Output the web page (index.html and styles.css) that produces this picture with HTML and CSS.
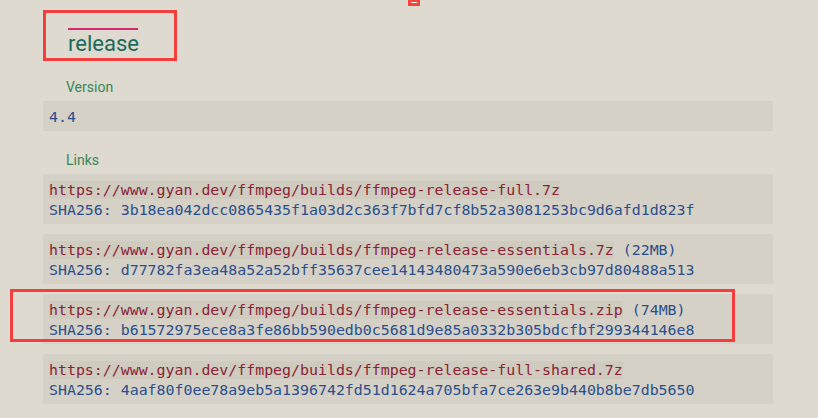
FILE: index.html
```
<!DOCTYPE html>
<html lang="en">
<head>
    <meta charset="UTF-8">
    <meta name="viewport" content="width=device-width, initial-scale=1.0">
    <title>release</title>
    <link rel="stylesheet" href="styles.css">
</head>
<body>
    <span class="top_mark"></span>
    <div class="container">
        <div class="title_box">
            <h2 class="title">release</h2>
        </div>

        <p class="label">Version</p>
        <div class="box"><code class="sha">4.4</code></div>

        <p class="label links_label">Links</p>
        <ul class="links">
            <li class="box">
                <code class="url">https://www.gyan.dev/ffmpeg/builds/ffmpeg-release-full.7z</code><br>
                <code class="sha">SHA256: 3b18ea042dcc0865435f1a03d2c363f7bfd7cf8b52a3081253bc9d6afd1d823f</code>
            </li>
            <li class="box">
                <code class="url">https://www.gyan.dev/ffmpeg/builds/ffmpeg-release-essentials.7z</code><code class="sha"> (22MB)</code><br>
                <code class="sha">SHA256: d77782fa3ea48a52a52bff35637cee14143480473a590e6eb3cb97d80488a513</code>
            </li>
            <li class="box marked">
                <span class="mark"></span>
                <code class="url">https://www.gyan.dev/ffmpeg/builds/ffmpeg-release-essentials.zip</code><code class="sha"> (74MB)</code><br>
                <code class="sha">SHA256: b61572975ece8a3fe86bb590edb0c5681d9e85a0332b305bdcfbf299344146e8</code>
            </li>
            <li class="box">
                <code class="url">https://www.gyan.dev/ffmpeg/builds/ffmpeg-release-full-shared.7z</code><br>
                <code class="sha">SHA256: 4aaf80f0ee78a9eb5a1396742fd51d1624a705bfa7ce263e9b440b8be7db5650</code>
            </li>
        </ul>
    </div>
</body>
</html>
```

FILE: styles.css
```
body { margin: 0; padding: 0; background: #dedacf; font-family: Roboto, "Liberation Sans", sans-serif; }
.container { width: 730px; padding: 10px 0 0 43px; }

.top_mark { position: absolute; left: 408px; top: 0; width: 12px; height: 6px; background: #f24438; }
.top_mark::after { content: ""; position: absolute; left: 3px; top: 2px; width: 6px; height: 1px; background: #fff; }

.title_box { display: inline-block; border: 3px solid #f43e3e; padding: 15px 36px 2px 22px; }
.title { margin: 0; padding-top: 2px; font-size: 22px; font-weight: normal; line-height: 24px; color: #1d6a5c; width: 70px; border-top: 2px solid #d42a74; }

.label { margin: 16px 0 4px 23px; font-size: 14px; line-height: 20px; color: #3a8758; }
.links_label { margin-top: 19px; }

.box { background: #d5d1c6; padding: 6px 6px 4px; line-height: 20px; }
code { font-family: "DejaVu Sans Mono", "Liberation Mono", monospace; font-size: 14.9px; }
.url { color: #8a2336; background: #cfcbbf; }
.sha { color: #2b4f8c; }

.links { list-style: none; margin: 0; padding: 0; }
.links li { margin-bottom: 10px; }
.marked { position: relative; }
.mark { position: absolute; left: -33px; top: -5px; width: 719px; height: 47px; border: 3px solid #f43e3e; }
```
